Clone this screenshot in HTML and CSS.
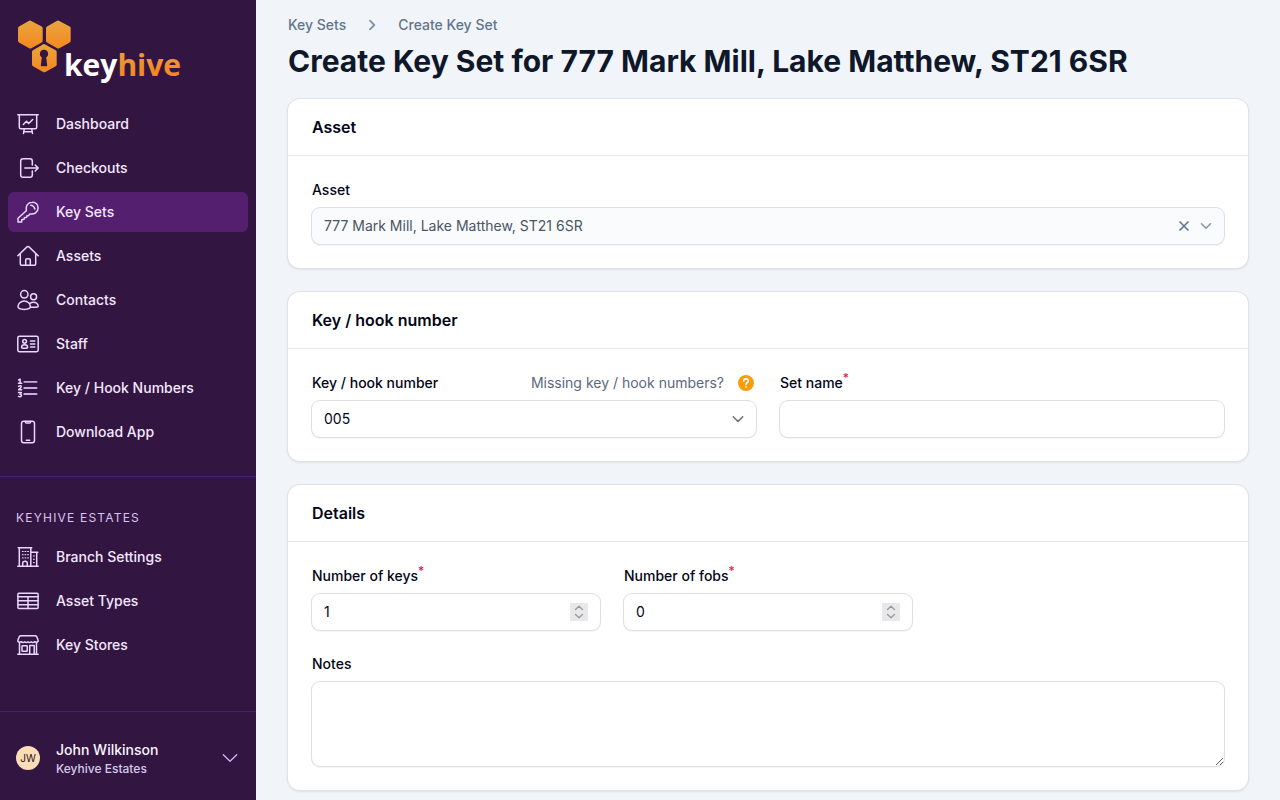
FILE: index.html
```html
<!DOCTYPE html>
<html lang="en">
<head>
<meta charset="utf-8">
<meta name="viewport" content="width=device-width, initial-scale=1">
<title>Create Key Set</title>
<link rel="stylesheet" href="styles.css">
</head>
<body>
<div class="app">
  <aside class="sidebar">
    <a class="brand" href="#" aria-label="keyhive">
      <svg class="logo" viewBox="0 0 172 68" role="img" aria-label="keyhive">
        <defs>
          <linearGradient id="honey" x1="0" y1="0" x2="0" y2="1">
            <stop offset="0" stop-color="#e9a63f"/>
            <stop offset="1" stop-color="#f5871f"/>
          </linearGradient>
          <linearGradient id="honey-text" gradientUnits="userSpaceOnUse" x1="0" y1="36" x2="0" y2="60">
            <stop offset="0" stop-color="#ea9c3a"/>
            <stop offset="1" stop-color="#f5871f"/>
          </linearGradient>
        </defs>
        <g fill="url(#honey)">
          <path d="M14.300 4.400 25.700 10.600Q26.700 11.200 26.700 12.300V24.800Q26.700 25.900 25.700 26.500L15.400 32.300Q14.300 32.900 13.200 32.300L3 26.500Q2 25.900 2 24.800V12.300Q2 11.200 3 10.600L13.200 4.700Q13.800 4.300 14.300 4.400Z"/>
          <path d="M42.300 4.400 53.700 10.600Q54.700 11.200 54.700 12.300V24.800Q54.700 25.900 53.700 26.500L43.400 32.300Q42.300 32.900 41.200 32.300L31 26.500Q30 25.900 30 24.800V12.300Q30 11.200 31 10.600L41.200 4.700Q41.800 4.300 42.300 4.400Z"/>
          <path d="M28.300 28 39.700 34.300Q40.700 34.900 40.700 36V48.500Q40.700 49.600 39.700 50.200L29.400 55.900Q28.300 56.500 27.200 55.900L17 50.200Q16 49.600 16 48.500V36Q16 34.900 17 34.300L27.200 28.300Q27.800 27.900 28.300 28Z"/>
        </g>
        <path fill="#331541" d="M28 33.800a4 4 0 0 1 2.200 7.400l1 8.300q0 .7-.8.700h-4.800q-.8 0-.8-.7l1-8.300A4 4 0 0 1 28 33.800Z"/>
        <text class="logo-text" x="48" y="60" fill="#fff">key<tspan fill="url(#honey-text)">hive</tspan></text>
      </svg>
    </a>
    <nav class="nav" aria-label="Main">
      <a class="nav-item" href="#">
        <svg class="icon" viewBox="0 0 24 24"><path d="M1.800 2.700H22.200M3.300 2.700V15.200Q3.300 16.700 4.800 16.700H19.200Q20.700 16.700 20.700 15.200V2.700M8.300 16.700 7.500 21.500M15.700 16.700 16.500 21.500M7.800 19.800H16.200M7.300 12.500 10.500 9.300 12.700 11.500 16.700 7.500"/></svg>
        Dashboard</a>
      <a class="nav-item" href="#">
        <svg class="icon" viewBox="0 0 24 24"><path d="M16.300 9V5Q16.300 2.700 14 2.700H7Q4.700 2.700 4.700 5V19Q4.700 21.300 7 21.300H14Q16.300 21.300 16.300 19V15M8.800 12H22.200M19.200 9 22.200 12 19.200 15"/></svg>
        Checkouts</a>
      <a class="nav-item active" href="#" aria-current="page">
        <svg class="icon" viewBox="0 0 24 24"><path d="M10.300 10.800C9.200 5.800 12.200 2.300 16.200 2.200 19.800 2 22.200 4.600 22.100 7.900 22 12 18.400 14.900 13.800 13.900L12.900 15.400 11 15.700 10.700 17.300 8.300 17.800 8 19.300 5.700 19.800V21.900H2V18.200ZM14.800 5.200Q17.700 5.300 18.900 9"/></svg>
        Key Sets</a>
      <a class="nav-item" href="#">
        <svg class="icon" viewBox="0 0 24 24"><path d="M1.800 11.700 11 2.900Q12 2 13 2.900L22.200 11.700M4.300 9.500V20Q4.300 21.200 5.500 21.200H18.500Q19.700 21.200 19.700 20V9.500M9.700 21V16Q9.700 14.700 11 14.700H13Q14.300 14.700 14.300 16V21"/></svg>
        Assets</a>
      <a class="nav-item" href="#">
        <svg class="icon" viewBox="0 0 24 24"><circle cx="8.300" cy="6.300" r="3.700"/><circle cx="17.600" cy="8.700" r="3"/><path d="M8.200 13C4.800 13 2 15.700 2 18.600 2 20.300 4.900 21.400 8.200 21.400S14.400 20.300 14.400 18.600C14.400 15.700 11.600 13 8.200 13ZM13.800 15.600Q15.300 14.300 17.600 14.300C20.400 14.300 22.200 16.400 22.200 18.200 22.200 19.200 19 19.500 14.600 19.300"/></svg>
        Contacts</a>
      <a class="nav-item" href="#">
        <svg class="icon" viewBox="0 0 24 24"><rect x="1.800" y="4.300" width="20.400" height="15.400" rx="1.700"/><circle cx="8.600" cy="9.300" r="1.900"/><path d="M8.600 12.700C6.900 12.700 5.600 13.900 5.600 15.200 5.600 16 7 16.300 8.600 16.300S11.600 16 11.600 15.200C11.600 13.900 10.300 12.700 8.600 12.700ZM14.500 9H18.800M14.500 12H18.800M14.500 15H18.800"/></svg>
        Staff</a>
      <a class="nav-item" href="#">
        <svg class="icon" viewBox="0 0 24 24"><path class="soft" d="M8.200 5.800H20.600M8.200 12H20.600M8.200 18H20.600"/><path d="M2.600 4 4.100 3.200V7.200M2.500 7.200H5.700M2.500 10.400Q5.300 8.800 5.200 10.900 5 12 2.600 13.700H5.700M2.500 16.500H5.400L4 18.300Q5.700 18.500 5.400 19.800 4.500 21.200 2.500 20.400"/></svg>
        Key / Hook Numbers</a>
      <a class="nav-item" href="#">
        <svg class="icon" viewBox="0 0 24 24"><rect x="5.500" y="1.300" width="13" height="21.400" rx="2.200"/><path d="M9.300 1.500Q9.300 3 10.300 3H13.700Q14.700 3 14.700 1.500M10.300 20.200H13.700"/></svg>
        Download App</a>
    </nav>
    <nav class="nav branch" aria-labelledby="branch-title">
      <h2 class="nav-title" id="branch-title">KEYHIVE ESTATES</h2>
      <a class="nav-item" href="#">
        <svg class="icon" viewBox="0 0 24 24"><path d="M2.200 2.800H15.800M3.300 2.800V21.300M14.800 2.800V21.300M14.800 7.300H21.800M20.700 7.300V21.300M1.800 21.300H22.200M6.700 21V18Q6.700 16.200 9 16.200T11.300 18V21"/><path d="M6.300 6.500H7.300M8.900 6.500H9.900M11.500 6.500H12.500M6.300 9.700H7.300M8.900 9.700H9.900M11.500 9.700H12.500M6.300 12.900H7.300M8.900 12.900H9.900M11.500 12.900H12.500M17.400 11H18.400M17.400 14.300H18.400M17.400 17.600H18.400" stroke-width="1"/></svg>
        Branch Settings</a>
      <a class="nav-item" href="#">
        <svg class="icon" viewBox="0 0 24 24"><rect x="1.900" y="4.200" width="20.200" height="15.400" rx="1"/><path d="M2 7.700H22M2 11.700H22M2 15.700H22M12 7.700V19.500"/></svg>
        Asset Types</a>
      <a class="nav-item" href="#">
        <svg class="icon" viewBox="0 0 24 24"><path d="M5 2.700H19Q20.200 2.700 20.700 3.700L22.100 7V8.200Q20.600 10.200 18.800 8.700 17 10.200 15.300 8.700 13.600 10.200 12 8.700 10.400 10.200 8.700 8.700 7 10.200 5.200 8.700 3.400 10.200 1.900 8.200V7L3.300 3.700Q3.800 2.700 5 2.700ZM3.500 9.500V21.300M20.500 9.500V21.300M1.800 21.300H22.200M13.700 21V12.500H18.200V21"/><rect x="6" y="12.800" width="5.200" height="5.400" rx=".5"/></svg>
        Key Stores</a>
    </nav>
    <button class="account" type="button">
      <span class="avatar">JW</span>
      <span class="account-text"><span class="account-name">John Wilkinson</span><span class="account-org">Keyhive Estates</span></span>
      <svg class="account-chevron" viewBox="0 0 16 16" aria-hidden="true"><path d="M1.300 4.800 8 11.300 14.700 4.800"/></svg>
    </button>
  </aside>

  <main class="main">
    <nav class="breadcrumbs" aria-label="Breadcrumb">
      <a href="#">Key Sets</a>
      <svg viewBox="0 0 12 12" aria-hidden="true"><path d="M4 1.700 8.300 6 4 10.300"/></svg>
      <a href="#">Create Key Set</a>
    </nav>
    <h1 class="title">Create Key Set for 777 Mark Mill, Lake Matthew, ST21 6SR</h1>

    <form class="form">
      <section class="card">
        <h2 class="card-title">Asset</h2>
        <div class="card-body">
          <div class="field">
            <label class="label" for="asset">Asset</label>
            <div class="control muted">
              <select class="input" id="asset"><option>777 Mark Mill, Lake Matthew, ST21 6SR</option></select>
              <button class="clear" type="button" aria-label="Clear asset"><svg viewBox="0 0 12 12"><path d="M1.500 1.500 10.500 10.500M10.500 1.500 1.500 10.500"/></svg></button>
              <svg class="chevron" viewBox="0 0 12 12" aria-hidden="true"><path d="M1.500 3.800 6 8.300 10.500 3.800"/></svg>
            </div>
          </div>
        </div>
      </section>

      <section class="card">
        <h2 class="card-title">Key / hook number</h2>
        <div class="card-body columns two">
          <div class="field">
            <div class="label-row">
              <label class="label" for="hook">Key / hook number</label>
              <span class="hint">Missing key / hook numbers?
                <button class="help" type="button" aria-label="Help"><svg viewBox="0 0 16 16"><circle cx="8" cy="8" r="8"/><path d="M5.700 6.100C5.800 3.200 10.300 3.200 10.300 5.900 10.300 7.600 8 7.600 8 9.400"/><path d="M8 11.900V12"/></svg></button>
              </span>
            </div>
            <div class="control">
              <select class="input" id="hook"><option>005</option></select>
              <svg class="chevron" viewBox="0 0 12 12" aria-hidden="true"><path d="M1.300 3.800 6 8.500 10.700 3.800"/></svg>
            </div>
          </div>
          <div class="field">
            <label class="label" for="set-name">Set name<sup>*</sup></label>
            <div class="control"><input class="input" id="set-name" type="text" required></div>
          </div>
        </div>
      </section>

      <section class="card">
        <h2 class="card-title">Details</h2>
        <div class="card-body columns three">
          <div class="field">
            <label class="label" for="keys">Number of keys<sup>*</sup></label>
            <div class="control">
              <input class="input" id="keys" type="number" value="1" required>
              <svg class="stepper" viewBox="0 0 18 18" aria-hidden="true"><path d="M5.500 6.500 9 3.300 12.500 6.500M5.500 11.500 9 14.700 12.500 11.500"/></svg>
            </div>
          </div>
          <div class="field">
            <label class="label" for="fobs">Number of fobs<sup>*</sup></label>
            <div class="control">
              <input class="input" id="fobs" type="number" value="0" required>
              <svg class="stepper" viewBox="0 0 18 18" aria-hidden="true"><path d="M5.500 6.500 9 3.300 12.500 6.500M5.500 11.500 9 14.700 12.500 11.500"/></svg>
            </div>
          </div>
          <div class="field full">
            <label class="label" for="notes">Notes</label>
            <textarea class="control notes" id="notes" rows="3"></textarea>
          </div>
        </div>
      </section>
    </form>
  </main>
</div>
</body>
</html>
```
FILE: styles.css
```css
*, *::before, *::after { box-sizing: border-box; }

body {
  margin: 0;
  background: #f1f5f9;
  color: #020617;
  font-family: Inter, "Liberation Sans", sans-serif;
  font-size: 14px;
  line-height: 20px;
}

h1, h2 { margin: 0; }
a { color: inherit; text-decoration: none; }
button, input, select, textarea { font: inherit; color: inherit; }
button { padding: 0; border: 0; background: none; cursor: pointer; }
svg { display: block; flex: none; fill: none; stroke-linecap: round; stroke-linejoin: round; }

.app { display: flex; height: 100vh; overflow: hidden; }

/* Sidebar */
.sidebar {
  display: flex;
  flex: none;
  flex-direction: column;
  width: 256px;
  background: #331541;
  color: #f3e8ff;
}
.brand { padding: 16px 16px 12px; }
.logo { width: 172px; height: 68px; }
.logo-text { font: 700 30px "Open Sans", sans-serif; }

.nav { display: flex; flex-direction: column; gap: 4px; padding: 8px 8px 24px; }
.branch { flex: 1; padding-top: 28px; border-top: 1px solid #4a2370; }
.nav-item {
  display: flex;
  align-items: center;
  gap: 16px;
  height: 40px;
  padding: 0 8px;
  border-radius: 6px;
  font-weight: 500;
}
.nav-item.active { background: #541f6e; }
.nav-title {
  padding: 4px 8px 6px;
  color: #d8c4f0;
  font-size: 12px;
  font-weight: 400;
  line-height: 18px;
  letter-spacing: 0.1em;
}
.icon { width: 24px; height: 24px; stroke: #e9d8fd; stroke-width: 1.5; }
.icon .soft { stroke: #c9a9e0; stroke-width: 1.8; }

.account {
  display: flex;
  align-items: center;
  gap: 16px;
  height: 89px;
  padding: 4px 18px 0 16px;
  border-top: 1px solid #4a2370;
  text-align: left;
}
.avatar {
  width: 24px;
  height: 24px;
  border-radius: 50%;
  background: #fddcb8;
  color: #1c1917;
  font-size: 10px;
  line-height: 24px;
  text-align: center;
}
.account-text { display: flex; flex: 1; flex-direction: column; padding-top: 2px; }
.account-name { color: #faf5ff; font-weight: 500; }
.account-org { color: #d3cbec; font-size: 12px; font-weight: 500; line-height: 18px; }
.account-chevron { width: 16px; height: 16px; stroke: #d8b4fe; stroke-width: 1.3; }

/* Page */
.main { flex: 1; min-width: 0; padding: 15px 32px 32px; overflow: hidden; }
.breadcrumbs {
  display: flex;
  align-items: center;
  gap: 20px;
  color: #64748b;
  font-weight: 500;
}
.breadcrumbs svg { width: 12px; height: 12px; stroke: #8390a5; stroke-width: 1.8; }
.title {
  margin: 8px 0 20px;
  color: #0f172a;
  font-size: 30px;
  font-weight: 700;
  line-height: 36px;
}

.form { display: flex; flex-direction: column; gap: 24px; }
.card {
  border-radius: 12px;
  background: #fff;
  box-shadow: 0 0 0 1px #dfe2e6, 0 1px 3px rgba(0, 0, 0, 0.16);
}
.card-title { padding: 16px 24px; font-size: 16px; font-weight: 600; line-height: 24px; }
.card-body { padding: 24px; border-top: 1px solid #e5e7eb; }
.columns { display: grid; gap: 24px; }
.two { grid-template-columns: repeat(2, minmax(0, 1fr)); }
.three { grid-template-columns: repeat(3, minmax(0, 1fr)); }
.full { grid-column: 1 / -1; }

.field { display: flex; flex-direction: column; gap: 8px; }
.label { font-weight: 500; }
.label sup { color: #e11d48; font-size: 12px; line-height: 0; }
.label-row { display: flex; justify-content: space-between; }
.hint { display: flex; align-items: center; gap: 14px; color: #5b6880; }
.help { margin-right: 2px; }
.help svg { width: 16px; height: 16px; stroke: #fff; stroke-width: 1.6; }
.help circle { fill: #f99d0a; stroke: none; }

.control {
  display: flex;
  align-items: center;
  min-height: 36px;
  padding: 0 12px;
  border-radius: 8px;
  background: #fff;
  box-shadow: 0 0 0 1px #dcdee1, 0 1px 2px rgba(0, 0, 0, 0.12);
}
.control:focus-within { box-shadow: 0 0 0 2px #541f6e; }
.input {
  flex: 1;
  min-width: 0;
  height: 36px;
  padding: 0;
  border: 0;
  outline: 0;
  background: none;
  appearance: none;
}
.input[type="number"] { height: 20px; appearance: textfield; }
.muted { background: #f9fbfd; color: #4b5563; }
.clear svg, .chevron { width: 12px; height: 12px; stroke-width: 1.6; }
.clear { margin-right: 10px; }
.clear svg { stroke: #64748b; stroke-linecap: butt; }
.chevron { stroke: #6b7280; }
.muted .chevron { stroke: #8b95a1; }
.stepper { width: 18px; height: 18px; background: #e8e8ea; stroke: #9a9a9e; stroke-width: 1.4; }
.notes { width: 100%; height: 84px; padding: 8px 12px; border: 0; outline: 0; resize: vertical; }
```
